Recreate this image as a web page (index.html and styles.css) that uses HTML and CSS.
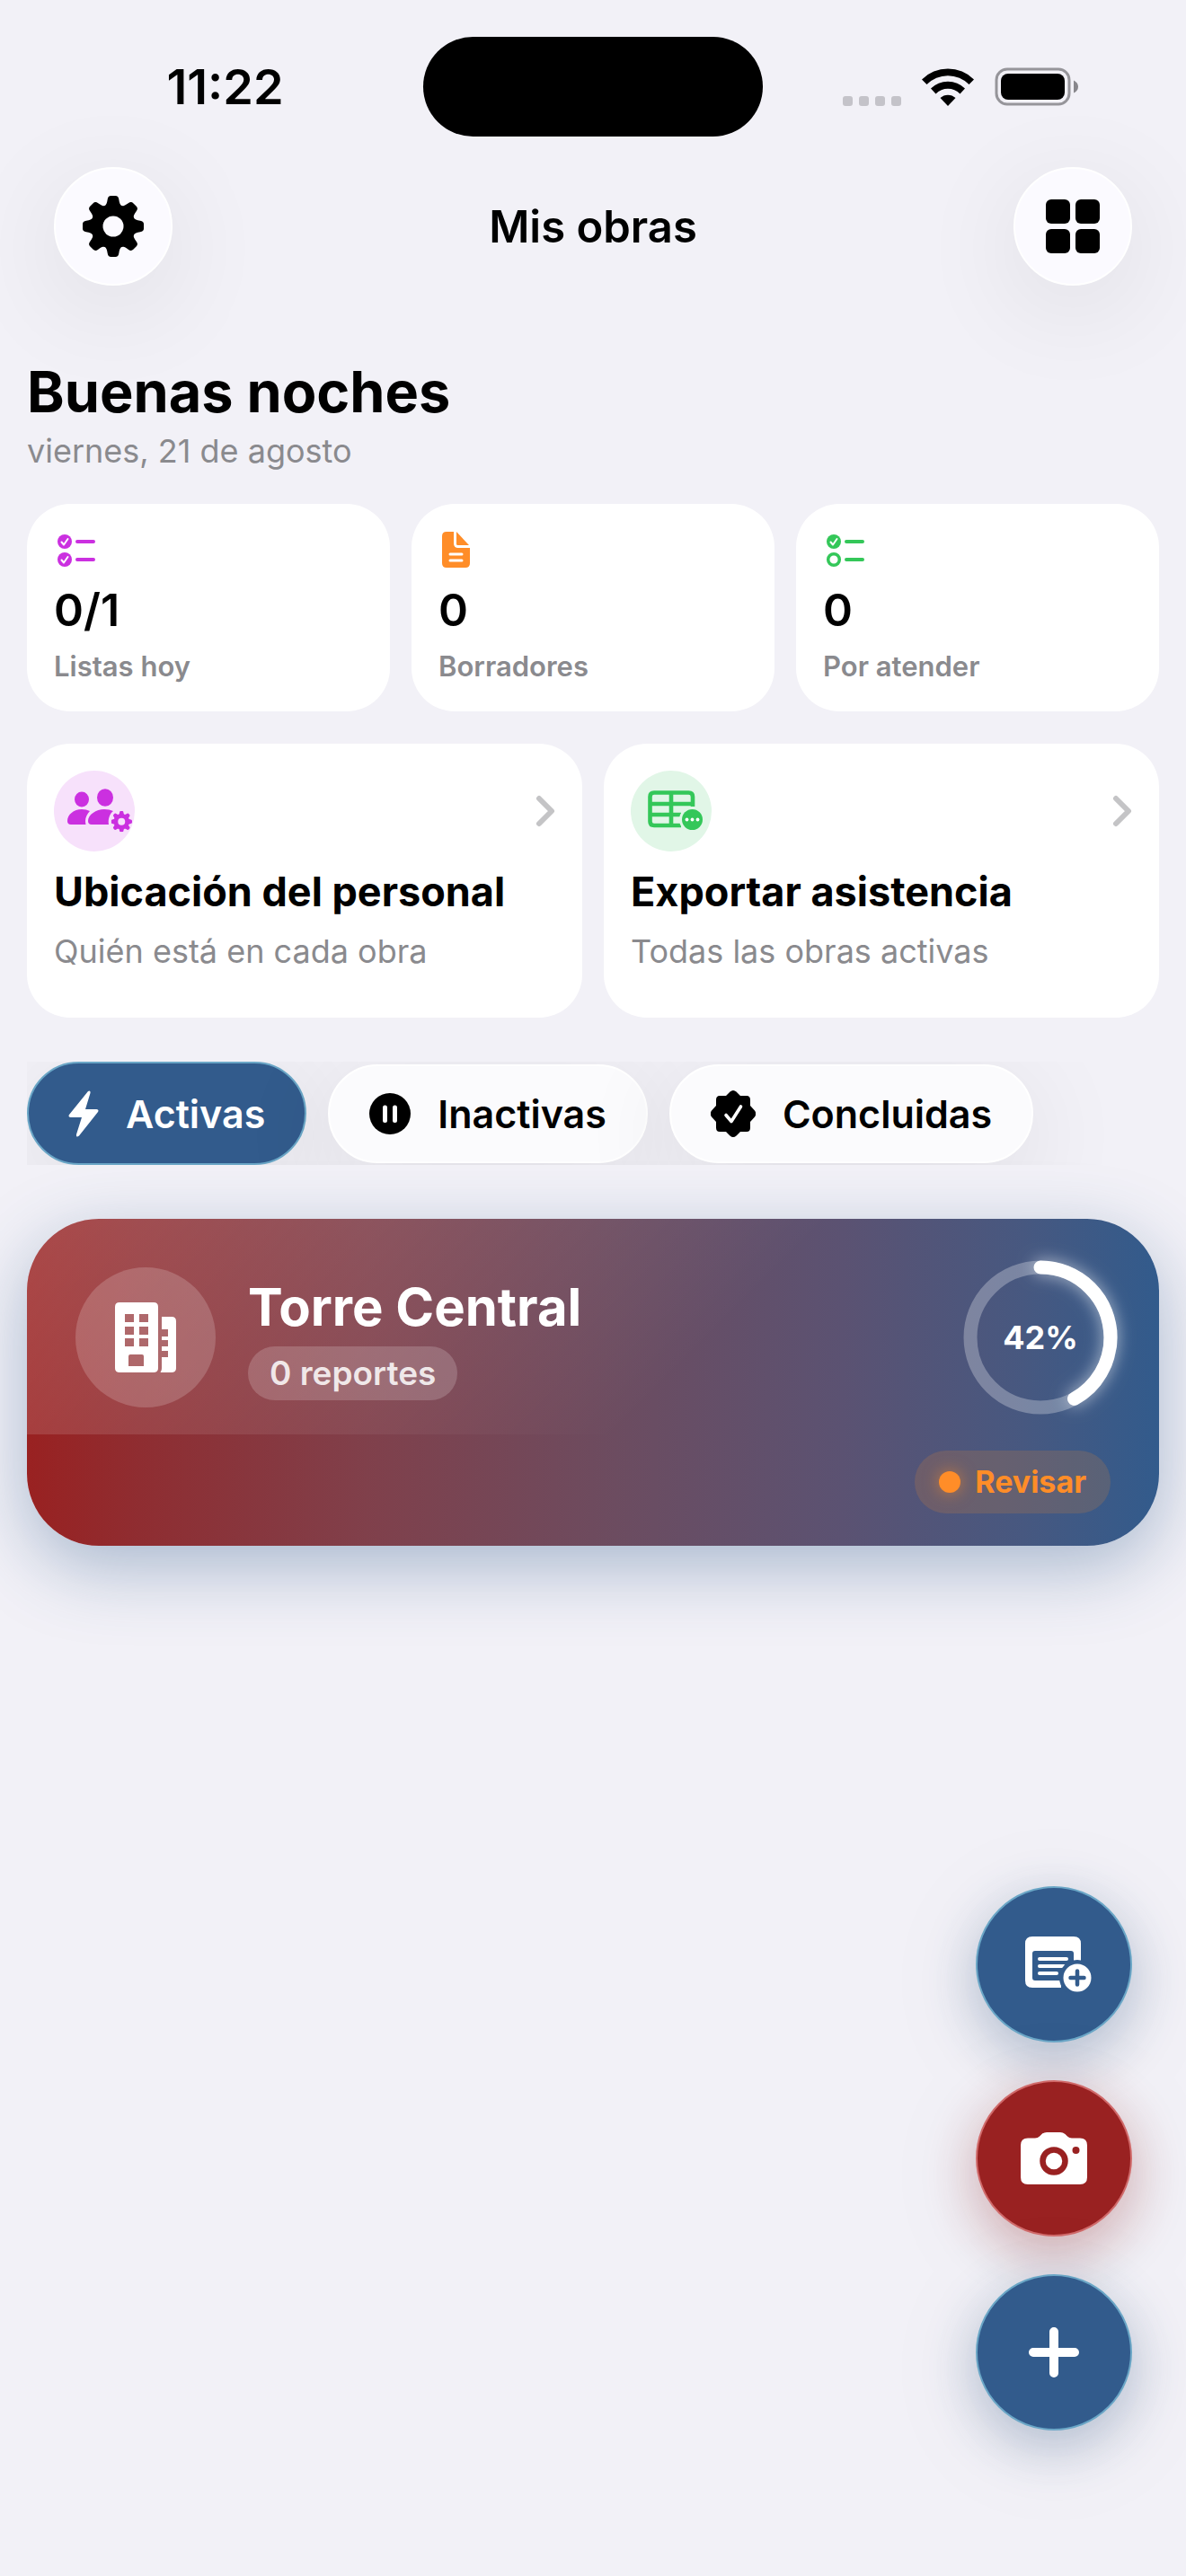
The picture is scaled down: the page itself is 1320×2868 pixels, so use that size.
FILE: index.html
```
<!DOCTYPE html>
<html lang="es">
<head>
    <meta charset="UTF-8">
    <meta name="viewport" content="width=device-width, initial-scale=1.0">
    <title>Mis obras</title>
    <link rel="stylesheet" href="styles.css">
</head>
<body>
    <!-- shared shapes -->
    <svg class="defs" width="0" height="0" aria-hidden="true">
        <defs>
            <symbol id="gear" viewBox="-34 -34 68 68">
                <mask id="gearHole">
                    <rect x="-34" y="-34" width="68" height="68" fill="#fff"/>
                    <circle r="11.5" fill="#000"/>
                </mask>
                <g mask="url(#gearHole)" fill="currentColor">
                    <circle r="25"/>
                    <path id="tooth" d="M-10-22C-7.5-24-7-26-6.300-30Q-5.800-34-2.500-34H2.500Q5.800-34 6.300-30C7-26 7.500-24 10-22Z"/>
                    <use href="#tooth" transform="rotate(45)"/>
                    <use href="#tooth" transform="rotate(90)"/>
                    <use href="#tooth" transform="rotate(135)"/>
                    <use href="#tooth" transform="rotate(180)"/>
                    <use href="#tooth" transform="rotate(225)"/>
                    <use href="#tooth" transform="rotate(270)"/>
                    <use href="#tooth" transform="rotate(315)"/>
                </g>
            </symbol>
        </defs>
    </svg>

    <div class="status-bar">
        <div class="time">11:22</div>
        <div class="island"></div>
        <div class="status-icons">
            <svg width="65" height="42" viewBox="0 0 65 42" fill="#c4c3c9">
                <rect x="0" y="31" width="11" height="11" rx="3"/>
                <rect x="18" y="31" width="11" height="11" rx="3"/>
                <rect x="36" y="31" width="11" height="11" rx="3"/>
                <rect x="54" y="31" width="11" height="11" rx="3"/>
            </svg>
            <svg width="58" height="42" viewBox="0 0 58 42">
                <path d="M0 12.500A41 41 0 0 1 58 12.500L52.500 18A33 33 0 0 0 5.500 18Z"/>
                <path d="M10 22.500A27 27 0 0 1 48 22.500L42.500 28.500A19 19 0 0 0 15.500 28.500Z"/>
                <path d="M20.500 33A12.500 12.500 0 0 1 37.500 33L29 42Z"/>
            </svg>
            <svg width="94" height="43" viewBox="0 0 94 43">
                <rect x="2" y="2" width="81" height="39" rx="12" fill="none" stroke="#96959a" stroke-width="3"/>
                <rect x="7" y="7" width="71" height="29" rx="8"/>
                <path d="M88 14.500Q93 17 93 21.500T88 28.500Z" fill="#88878c"/>
            </svg>
        </div>
    </div>

    <header class="nav-bar">
        <button class="round-button" type="button" aria-label="Ajustes">
            <svg width="68" height="68"><use href="#gear"/></svg>
        </button>
        <h1 class="nav-title">Mis obras</h1>
        <button class="round-button" type="button" aria-label="Vista">
            <svg width="60" height="60" viewBox="0 0 60 60">
                <rect width="27" height="27" rx="6"/>
                <rect x="33" width="27" height="27" rx="6"/>
                <rect y="33" width="27" height="27" rx="6"/>
                <rect x="33" y="33" width="27" height="27" rx="6"/>
            </svg>
        </button>
    </header>

    <main class="content">
        <section class="greeting">
            <h2>Buenas noches</h2>
            <p>viernes, 21 de agosto</p>
        </section>

        <section class="stats">
            <div class="stat">
                <svg class="purple" width="46" height="42" viewBox="0 0 46 42">
                    <circle cx="12" cy="12" r="8" fill="currentColor"/>
                    <circle cx="12" cy="32" r="8" fill="currentColor"/>
                    <path d="M8.500 12.500L11 15.500L15.500 9M8.500 32.500L11 35.500L15.500 29" stroke="#fff" stroke-width="2" fill="none" stroke-linecap="round" stroke-linejoin="round"/>
                    <path d="M26 12H44M26 32H44" stroke="currentColor" stroke-width="4" stroke-linecap="round"/>
                </svg>
                <strong>0/1</strong>
                <span>Listas hoy</span>
            </div>
            <div class="stat">
                <svg class="orange" width="46" height="42" viewBox="0 0 46 42">
                    <path d="M9 1H17V14Q17 19 22 19H35V36Q35 41 30 41H9Q4 41 4 36V6Q4 1 9 1Z" fill="currentColor"/>
                    <path d="M20 1L34 16H21.500Q20 16 20 14.500Z" fill="currentColor"/>
                    <path d="M13 26H26M13 33H26" stroke="#fff" stroke-width="3" stroke-linecap="round"/>
                </svg>
                <strong>0</strong>
                <span>Borradores</span>
            </div>
            <div class="stat">
                <svg class="green" width="46" height="42" viewBox="0 0 46 42">
                    <circle cx="12" cy="12" r="8" fill="currentColor"/>
                    <circle cx="12" cy="32" r="6.300" fill="none" stroke="currentColor" stroke-width="3.500"/>
                    <path d="M8.500 12.500L11 15.500L15.500 9" stroke="#fff" stroke-width="2" fill="none" stroke-linecap="round" stroke-linejoin="round"/>
                    <path d="M26 12H44M26 32H44" stroke="currentColor" stroke-width="4" stroke-linecap="round"/>
                </svg>
                <strong>0</strong>
                <span>Por atender</span>
            </div>
        </section>

        <section class="actions">
            <a class="action" href="#personal">
                <div class="action-top">
                    <div class="action-icon purple">
                        <svg width="90" height="90" viewBox="0 0 90 90" fill="currentColor">
                            <ellipse cx="31" cy="32" rx="8" ry="8.500"/>
                            <ellipse cx="57" cy="30" rx="9" ry="9.800"/>
                            <path d="M19 60Q15 60 15 56C15 49 22 43 31 43Q36 43 40 45C37 48 35 52 35 56Q35 58 35.500 60Z"/>
                            <path d="M42 60Q38 60 38 56C38 49 47 43 56 43Q62 43 66 45C62 48 60 54 61 60Z"/>
                            <svg x="63.500" y="45" width="23.500" height="23.500"><use href="#gear"/></svg>
                        </svg>
                    </div>
                    <svg class="chevron" width="22" height="36" viewBox="0 0 22 36"><path d="M4 4L18 18L4 32"/></svg>
                </div>
                <h3>Ubicación del personal</h3>
                <p>Quién está en cada obra</p>
            </a>
            <a class="action" href="#asistencia">
                <div class="action-top">
                    <div class="action-icon green">
                        <svg width="90" height="90" viewBox="0 0 90 90">
                            <path d="M69 40V29Q69 24.500 64.500 24.500H26Q21.500 24.500 21.500 29V56.500Q21.500 61 26 61H56M21.500 37H69M21.500 49H56M45 24.500V61" fill="none" stroke="currentColor" stroke-width="4.600"/>
                            <circle cx="68.500" cy="54.500" r="14.500" fill="#e1f6e7"/>
                            <circle cx="68.500" cy="54.500" r="11.500" fill="currentColor"/>
                            <g fill="#fff">
                                <circle cx="62.500" cy="54.500" r="1.900"/>
                                <circle cx="68.500" cy="54.500" r="1.900"/>
                                <circle cx="74.500" cy="54.500" r="1.900"/>
                            </g>
                        </svg>
                    </div>
                    <svg class="chevron" width="22" height="36" viewBox="0 0 22 36"><path d="M4 4L18 18L4 32"/></svg>
                </div>
                <h3>Exportar asistencia</h3>
                <p>Todas las obras activas</p>
            </a>
        </section>

        <div class="filters">
            <button class="chip active" type="button">
                <svg width="34" height="52" viewBox="0 0 34 52" fill="currentColor">
                    <path d="M22 1Q25-.5 24.500 3L19 21H31.500Q34.500 21.500 33 24L12 50.500Q8.500 53 9 49L15 30H2.500Q-.5 29.500 1 27Z"/>
                </svg>
                Activas
            </button>
            <button class="chip" type="button">
                <svg width="46" height="46" viewBox="0 0 46 46">
                    <circle cx="23" cy="23" r="23"/>
                    <path d="M17.500 16V30.500M28.500 16V30.500" stroke="#fff" stroke-width="5" stroke-linecap="round"/>
                </svg>
                Inactivas
            </button>
            <button class="chip" type="button">
                <svg width="50" height="52" viewBox="-25 -26 50 52">
                    <path d="M-3.500-24.500Q0-27.500 3.500-24.500L8-20H15Q19-20 19-15.500V-9L24-3.500Q26.500 0 24 3.500L19 9V15.500Q19 20 15 20H8L3.500 24.500Q0 27.500-3.500 24.500L-8 20H-15Q-19 20-19 15.500V9L-24 3.500Q-26.500 0-24-3.500L-19-9V-15.500Q-19-20-15-20H-8Z"/>
                    <path d="M-8 1.500L-2 8.500L8.500-8" fill="none" stroke="#fff" stroke-width="3.600" stroke-linecap="round" stroke-linejoin="round"/>
                </svg>
                Concluidas
            </button>
        </div>

        <a class="project" href="#torre-central">
            <div class="project-top">
                <div class="project-icon">
                    <svg width="68" height="78" viewBox="0 0 68 78">
                        <path fill="#fff" fill-rule="evenodd" d="M5 0H43Q48 0 48 5V73Q48 78 43 78H5Q0 78 0 73V5Q0 0 5 0ZM11 13V22H21V13ZM27 13V22H37V13ZM11 27V36H21V27ZM27 27V36H37V27ZM11 40V49H21V40ZM27 40V49H37V40ZM15 60V71H32V60Q32 58 30 58H17Q15 58 15 60Z"/>
                        <path fill="#fff" d="M52 16H63Q68 16 68 21V73Q68 78 63 78H50.500Q52 76 52 73V61H59V54H52V49H59V42H52V38H59V30H52Z"/>
                    </svg>
                </div>
                <div class="project-info">
                    <h3>Torre Central</h3>
                    <span class="reports">0 reportes</span>
                </div>
                <div class="progress">
                    <svg width="172" height="172" viewBox="0 0 172 172">
                        <circle class="track" cx="86" cy="86" r="78"/>
                        <circle class="value" cx="86" cy="86" r="78" pathLength="100" stroke-dasharray="42 100" transform="rotate(-90 86 86)"/>
                    </svg>
                    <span>42%</span>
                </div>
            </div>
            <div class="project-bottom">
                <span class="badge"><i></i>Revisar</span>
            </div>
        </a>
    </main>

    <div class="fabs">
        <button class="fab" type="button" aria-label="Nuevo reporte">
            <svg width="84" height="62" viewBox="-10 0 84 62">
                <path d="M8 0H54Q62 0 62 8V28H54V19Q54 16 51 16H11Q8 16 8 19V46Q8 49 11 49H40V57H8Q0 57 0 49V8Q0 0 8 0Z" fill="#fff"/>
                <path d="M16 25H46M16 33H43M16 41H35" stroke="#fff" stroke-width="4" stroke-linecap="round"/>
                <circle cx="58" cy="46" r="20" fill="#325b8c"/>
                <circle cx="58" cy="46" r="15.500" fill="#fff"/>
                <path d="M50.500 46H65.500M58 38.500V53.500" stroke="#325b8c" stroke-width="4.500" stroke-linecap="round"/>
            </svg>
        </button>
        <button class="fab red" type="button" aria-label="Cámara">
            <svg width="74" height="58" viewBox="0 0 74 58">
                <path d="M8 6.500H16Q19 6.500 21 4.500L23.500 2Q26 0 29 0H44Q47 0 49.500 2L52 4.500Q54 6.500 57 6.500H66Q74 6.500 74 14.500V50Q74 58 66 58H8Q0 58 0 50V14.500Q0 6.500 8 6.500Z" fill="#fff"/>
                <circle cx="37" cy="32" r="12.500" fill="none" stroke="#992121" stroke-width="6.500"/>
                <circle cx="61.500" cy="20" r="4" fill="#992121"/>
            </svg>
        </button>
        <button class="fab" type="button" aria-label="Agregar">
            <svg width="56" height="56" viewBox="0 0 56 56"><path d="M5 28H51M28 5V51" stroke="#fff" stroke-width="10" stroke-linecap="round"/></svg>
        </button>
    </div>
</body>
</html>
```
FILE: styles.css
```
* {
    box-sizing: border-box;
}

body {
    margin: 0;
    min-height: 100vh;
    background-color: #f2f1f7;
    color: #000;
    font-family: Inter, "Liberation Sans", Arial, sans-serif;
}

h1, h2, h3, p {
    margin: 0;
}

a {
    color: inherit;
    text-decoration: none;
}

button {
    border: none;
    color: inherit;
    font-family: inherit;
    cursor: pointer;
}

svg {
    display: block;
    flex-shrink: 0;
}

.defs {
    position: absolute;
}

.purple {
    color: #cb30e0;
}

.orange {
    color: #ff8d28;
}

.green {
    color: #34c759;
}

/* status bar */
.status-bar {
    display: grid;
    grid-template-columns: 1fr 378px 1fr;
    align-items: center;
    padding-top: 41px;
}

.time {
    padding-left: 30px;
    text-align: center;
    font-size: 54px;
    line-height: 64px;
    font-weight: 600;
}

.island {
    height: 111px;
    border-radius: 56px;
    background-color: #000;
}

.status-icons {
    display: flex;
    align-items: center;
    justify-content: center;
    gap: 23px;
    padding-right: 30px;
}

/* nav bar */
.nav-bar {
    display: flex;
    align-items: center;
    justify-content: space-between;
    padding: 34px 60px 0;
}

.nav-title {
    font-size: 49px;
    font-weight: 600;
}

.round-button {
    display: flex;
    align-items: center;
    justify-content: center;
    width: 132px;
    height: 132px;
    padding: 0;
    border: 2px solid #fff;
    border-radius: 50%;
    background-color: #fbfaff;
    box-shadow: 0 24px 120px rgba(0, 0, 0, 0.09);
}

/* content */
.content {
    display: flex;
    flex-direction: column;
    padding: 78px 30px 60px;
}

.greeting h2 {
    font-size: 63px;
    line-height: 80px;
    font-weight: 700;
}

.greeting p {
    color: #8a8a8e;
    font-size: 36px;
    line-height: 52px;
}

.stats {
    display: grid;
    grid-template-columns: repeat(3, 1fr);
    gap: 24px;
    margin-top: 33px;
}

.stat {
    display: flex;
    flex-direction: column;
    padding: 30px;
    border-radius: 48px;
    background-color: #fff;
}

.stat strong {
    margin-top: 16px;
    font-size: 50px;
    line-height: 60px;
    font-weight: 600;
}

.stat span {
    margin-top: 13px;
    color: #8a8a8e;
    font-size: 31px;
    line-height: 40px;
    font-weight: 600;
}

.actions {
    display: grid;
    grid-template-columns: repeat(2, 1fr);
    gap: 24px;
    margin-top: 36px;
}

.action {
    padding: 30px 30px 50px;
    border-radius: 48px;
    background-color: #fff;
}

.action-top {
    display: flex;
    align-items: center;
    justify-content: space-between;
}

.action-icon {
    width: 90px;
    height: 90px;
    border-radius: 50%;
}

.action-icon.purple {
    background-color: #f7e1fb;
}

.action-icon.green {
    background-color: #e1f6e7;
}

.chevron {
    fill: none;
    stroke: #c4c4c6;
    stroke-width: 6;
    stroke-linecap: round;
    stroke-linejoin: round;
}

.action h3 {
    margin-top: 17px;
    font-size: 45px;
    line-height: 56px;
    font-weight: 700;
}

.action p {
    margin-top: 14px;
    color: #8a8a8e;
    font-size: 36px;
    line-height: 48px;
}

/* filters */
.filters {
    display: flex;
    align-items: center;
    gap: 24px;
    margin-top: 49px;
    overflow: hidden;
}

.chip {
    display: flex;
    align-items: center;
    gap: 30px;
    height: 110px;
    padding: 0 44px;
    border: 2px solid #fff;
    border-radius: 55px;
    background-color: #fbfbfd;
    box-shadow: 0 24px 120px rgba(0, 0, 0, 0.09);
    font-size: 43px;
    font-weight: 600;
}

.chip.active {
    height: 115px;
    border-color: #6aa6c6;
    border-radius: 58px;
    background-color: #325b8c;
    color: #fff;
}

/* project card */
.project {
    margin-top: 60px;
    border-radius: 80px;
    background: linear-gradient(90deg, #992121, #8f2d31 10%, #80404b 30%, #6c4c60 52%, #5b5272 72%, #475880 88%, #325b8c);
    box-shadow: 0 24px 80px rgba(50, 91, 140, 0.38);
    color: #fff;
    overflow: hidden;
}

.project-top {
    display: flex;
    align-items: center;
    height: 240px;
    padding: 24px 46px 0 54px;
    background: linear-gradient(135deg, rgba(255, 255, 255, 0.18), rgba(255, 255, 255, 0) 60%);
}

.project-icon {
    display: flex;
    align-items: center;
    justify-content: center;
    width: 156px;
    height: 156px;
    border-radius: 50%;
    background-color: rgba(255, 255, 255, 0.18);
}

.project-info {
    display: flex;
    flex: 1;
    flex-direction: column;
    align-items: flex-start;
    gap: 8px;
    padding-left: 36px;
}

.project-info h3 {
    font-size: 58px;
    line-height: 72px;
    font-weight: 700;
}

.reports {
    padding: 6px 24px;
    border-radius: 30px;
    background-color: rgba(255, 255, 255, 0.18);
    color: rgba(255, 255, 255, 0.85);
    font-size: 37px;
    line-height: 48px;
    font-weight: 600;
}

.progress {
    display: grid;
    place-items: center;
}

.progress > * {
    grid-area: 1 / 1;
}

.progress svg {
    overflow: visible;
}

.progress circle {
    fill: none;
    stroke-width: 15;
}

.progress .track {
    stroke: rgba(255, 255, 255, 0.28);
}

.progress .value {
    stroke: #fff;
    stroke-linecap: round;
    filter: drop-shadow(0 0 9px rgba(255, 255, 255, 0.6));
}

.progress span {
    font-size: 36px;
    font-weight: 700;
}

.project-bottom {
    display: flex;
    justify-content: flex-end;
    padding: 18px 54px 36px;
}

.badge {
    display: flex;
    align-items: center;
    gap: 16px;
    padding: 0 27px;
    border-radius: 35px;
    background-color: rgba(255, 141, 40, 0.16);
    color: #ff8d28;
    font-size: 34px;
    line-height: 70px;
    font-weight: 700;
}

.badge i {
    width: 24px;
    height: 24px;
    border-radius: 50%;
    background-color: #ff8d28;
    box-shadow: 0 0 18px rgba(255, 141, 40, 0.6);
}

/* floating buttons */
.fabs {
    position: fixed;
    right: 60px;
    bottom: 162px;
    display: flex;
    flex-direction: column;
    gap: 42px;
}

.fab {
    display: flex;
    align-items: center;
    justify-content: center;
    width: 174px;
    height: 174px;
    padding: 0;
    border: 2px solid #6aa6c6;
    border-radius: 50%;
    background-color: #325b8c;
    box-shadow: 0 18px 60px rgba(50, 91, 140, 0.3), 0 18px 120px rgba(0, 0, 0, 0.08);
}

.fab.red {
    border-color: #d06a6a;
    background-color: #992121;
    box-shadow: 0 18px 60px rgba(153, 33, 33, 0.3), 0 18px 120px rgba(0, 0, 0, 0.08);
}
```
